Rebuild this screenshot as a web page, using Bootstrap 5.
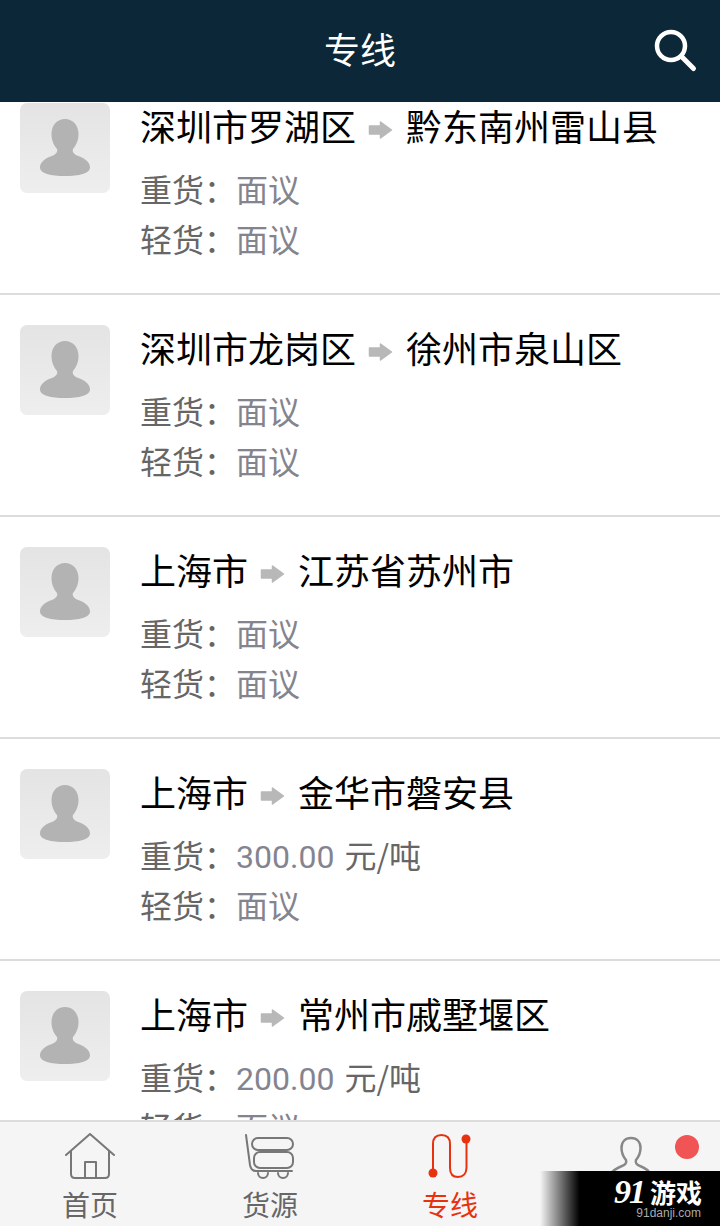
<!DOCTYPE html>
<html lang="zh-CN">
<head>
<meta charset="utf-8">
<title>专线</title>
<link rel="stylesheet" href="https://cdn.jsdelivr.net/npm/bootstrap@5.3.0/dist/css/bootstrap.min.css">
<style>
html,body{height:100%;overflow:hidden;background:#fff;font-family:"Noto Sans CJK SC",sans-serif}
.shell{height:1226px;position:relative}
.topbar{height:102px;background:#0c2737;color:#fff;font-size:36px;line-height:1;padding-bottom:6px;position:relative}
.topbar-search{position:absolute;right:22px;top:28px}
.scroll-area{height:1018px;overflow:hidden}
.route-list{margin-top:-29px}
.route-item{padding:30px 20px 28px;border-bottom:2px solid #dcdcdc;gap:30px}
.avatar-box{width:90px;height:90px;border-radius:7px;background:linear-gradient(#e4e4e4,#eeeeee)}
.route-title{font-size:36px;line-height:44px;height:50px;color:#000;margin-bottom:12px;white-space:nowrap}
.route-arrow{margin:0 12px;vertical-align:1px}
.detail-line{font-size:32px;line-height:46px;height:50px;color:#666;white-space:nowrap}
.price{color:#84848f}
.price-num{font-family:Roboto,sans-serif;margin-right:3px}
.tabbar{height:106px;background:#f5f5f5;border-top:2px solid #dcdcdc}
.tab-item{width:180px;color:#666;font-size:28px;line-height:30px;position:relative}
.tab-item svg{display:block;margin:11px auto 0}
.tab-label{display:block;margin-top:8px;text-align:center}
.tab-active{color:#e8320f}
.dot-alert{position:absolute;top:13px;right:21px;width:24px;height:24px;border-radius:50%;background:#f05454}
.watermark{position:absolute;right:0;bottom:0;width:180px;height:55px;background:linear-gradient(90deg,rgba(0,0,0,0),#000 22%);color:#fff}
.wm-logo{position:absolute;right:18px;top:7px;font-size:26px;line-height:27px;font-weight:700;white-space:nowrap}
.wm-logo i{font-family:"Liberation Serif",serif;font-size:34px;letter-spacing:-2px}
.wm-url{position:absolute;right:19px;top:34px;font-family:"Liberation Sans",sans-serif;font-size:12px;line-height:16px;color:#aaa}
</style>
</head>
<body>
<svg width="0" height="0" class="position-absolute">
<defs>
<symbol id="person" viewBox="0 0 90 90"><path fill="#b3b3b3" d="M45 16c-8 0-13.500 6.500-13.500 15 0 7 3 12 5.500 15 1 3-1 5-4 6.500-7 2.500-13 6-13 12 0 6 11 8.500 25 8.500s25-2.500 25-8.500c0-6-6-9.500-13-12-3-1.500-5-3.500-4-6.500 2.500-3 5.500-8 5.500-15 0-8.500-5.500-15-13.500-15z"/></symbol>
<symbol id="arrow" viewBox="0 0 26 20"><path fill="#b8b8b8" stroke="#b8b8b8" stroke-width="1.500" stroke-linejoin="round" d="M1.500 6h11V2l11 8-11 8v-4h-11z"/></symbol>
</defs>
</svg>
<div class="shell d-flex flex-column">
  <header class="topbar d-flex align-items-center justify-content-center flex-shrink-0">
    <span>专线</span>
    <svg class="topbar-search" width="44" height="46" viewBox="0 0 44 46" fill="none" stroke="#fff" stroke-linecap="round"><circle cx="17" cy="18" r="14" stroke-width="4.500"/><path d="M28.500 29.500l11 11" stroke-width="5"/></svg>
  </header>
  <main class="scroll-area flex-shrink-0">
    <ul class="route-list list-unstyled mb-0">
      <li class="route-item d-flex">
        <div class="avatar-box flex-shrink-0"><svg width="90" height="90"><use href="#person"/></svg></div>
        <div>
          <div class="route-title">深圳市罗湖区<svg class="route-arrow" width="26" height="20"><use href="#arrow"/></svg>黔东南州雷山县</div>
          <div class="detail-line">重货：<span class="price">面议</span></div>
          <div class="detail-line">轻货：<span class="price">面议</span></div>
        </div>
      </li>
      <li class="route-item d-flex">
        <div class="avatar-box flex-shrink-0"><svg width="90" height="90"><use href="#person"/></svg></div>
        <div>
          <div class="route-title">深圳市龙岗区<svg class="route-arrow" width="26" height="20"><use href="#arrow"/></svg>徐州市泉山区</div>
          <div class="detail-line">重货：<span class="price">面议</span></div>
          <div class="detail-line">轻货：<span class="price">面议</span></div>
        </div>
      </li>
      <li class="route-item d-flex">
        <div class="avatar-box flex-shrink-0"><svg width="90" height="90"><use href="#person"/></svg></div>
        <div>
          <div class="route-title">上海市<svg class="route-arrow" width="26" height="20"><use href="#arrow"/></svg>江苏省苏州市</div>
          <div class="detail-line">重货：<span class="price">面议</span></div>
          <div class="detail-line">轻货：<span class="price">面议</span></div>
        </div>
      </li>
      <li class="route-item d-flex">
        <div class="avatar-box flex-shrink-0"><svg width="90" height="90"><use href="#person"/></svg></div>
        <div>
          <div class="route-title">上海市<svg class="route-arrow" width="26" height="20"><use href="#arrow"/></svg>金华市磐安县</div>
          <div class="detail-line">重货：<span class="price price-num">300.00</span> 元/吨</div>
          <div class="detail-line">轻货：<span class="price">面议</span></div>
        </div>
      </li>
      <li class="route-item d-flex">
        <div class="avatar-box flex-shrink-0"><svg width="90" height="90"><use href="#person"/></svg></div>
        <div>
          <div class="route-title">上海市<svg class="route-arrow" width="26" height="20"><use href="#arrow"/></svg>常州市戚墅堰区</div>
          <div class="detail-line">重货：<span class="price price-num">200.00</span> 元/吨</div>
          <div class="detail-line">轻货：<span class="price">面议</span></div>
        </div>
      </li>
    </ul>
  </main>
  <nav class="tabbar d-flex flex-shrink-0">
    <a class="tab-item text-decoration-none">
      <svg width="50" height="48" viewBox="0 0 50 48" fill="none" stroke="#777" stroke-width="2" stroke-linecap="round" stroke-linejoin="round"><path d="M1 22L25 1l24 21"/><path d="M6 18v23q0 4 4 4h30q4 0 4-4V18"/><path d="M20 45V29h11v16"/></svg>
      <span class="tab-label">首页</span>
    </a>
    <a class="tab-item text-decoration-none">
      <svg width="50" height="48" viewBox="0 0 50 48" fill="none" stroke="#777" stroke-width="2" stroke-linecap="round"><path d="M1 2l4 30q1 6 6 6h36"/><rect x="7" y="5" width="41" height="12" rx="6"/><rect x="9" y="19" width="39" height="16" rx="6"/><path d="M13 40a5 5 0 0 0 10 0M33 40a5 5 0 0 0 10 0"/></svg>
      <span class="tab-label">货源</span>
    </a>
    <a class="tab-item tab-active text-decoration-none">
      <svg width="50" height="48" viewBox="0 0 50 48" fill="none" stroke="#e8320f" stroke-width="2"><path d="M8 40V11q0-9 8.500-9t8.500 9v24q0 9 8 9t8.500-9V6"/><circle cx="8" cy="40" r="4.500" fill="#e8320f" stroke="none"/><circle cx="41" cy="6" r="4.500" fill="#e8320f" stroke="none"/></svg>
      <span class="tab-label">专线</span>
    </a>
    <a class="tab-item text-decoration-none">
      <svg width="50" height="48" viewBox="0 0 50 48" fill="none" stroke="#888" stroke-width="2.500"><path d="M26 5c-6 0-9.500 4-9.500 10 0 5 2 9 4.500 12 1 3-1 5-4 6-5 2-9 4-11 8M26 5c6 0 9.500 4 9.500 10 0 5-2 9-4.500 12-1 3 1 5 4 6 5 2 9 4 10 8"/></svg>
      <span class="dot-alert"></span>
    </a>
  </nav>
  <div class="watermark">
    <span class="wm-logo"><i>91</i> 游戏</span>
    <span class="wm-url">91danji.com</span>
  </div>
</div>
<script src="https://cdn.jsdelivr.net/npm/bootstrap@5.3.0/dist/js/bootstrap.bundle.min.js"></script>
</body>
</html>
